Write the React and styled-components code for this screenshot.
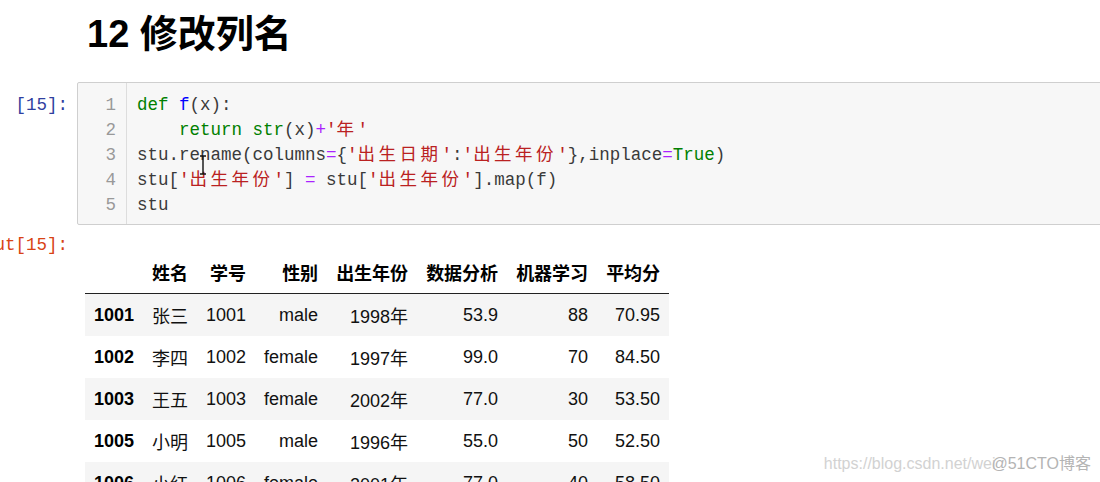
import React from "react";
import styled, { createGlobalStyle } from "styled-components";

const GlobalStyle = createGlobalStyle`
  html, body {
    margin: 0;
    padding: 0;
    background: #ffffff;
    overflow: hidden;
  }
`;

const Notebook = styled.div`
  position: relative;
  width: 1100px;
  height: 482px;
  overflow: hidden;
  font-family: "Liberation Sans", "Noto Sans CJK SC", sans-serif;
`;

const Title = styled.h1`
  margin: 0 0 25px 0;
  padding: 11px 0 0 87px;
  font-size: 38px;
  line-height: 46px;
  font-weight: 700;
  color: #000;
`;

const CellRow = styled.div`
  display: flex;
  align-items: flex-start;
  margin-top: ${(p) => p.$top || 0}px;
`;

const Prompt = styled.div`
  flex: 0 0 72px;
  width: 72px;
  min-width: 0;
  display: flex;
  justify-content: flex-end;
  padding: ${(p) => p.$pad || 0}px 4px 0 0;
  box-sizing: border-box;
  font-family: "Liberation Mono", "Noto Sans CJK SC", monospace;
  font-size: 17.5px;
  line-height: 25px;
  white-space: pre;
  color: ${(p) => (p.$out ? "#d84315" : "#303f9f")};
`;

const InputBox = styled.div`
  position: relative;
  flex: 0 0 1040px;
  margin-left: 5px;
  display: flex;
  background: #f7f7f7;
  border: 1px solid #cfcfcf;
  border-radius: 2px;
  padding: 10px 0 6px;
  font-family: "Liberation Mono", "Noto Sans CJK SC", monospace;
  font-size: 17.5px;
  line-height: 25px;
`;

const Gutter = styled.div`
  width: 49px;
  box-sizing: border-box;
  margin: -10px 0 -6px;
  padding: 10px 10px 6px 0;
  border-right: 1px solid #dddddd;
  text-align: right;
  color: #999999;
`;

const Lines = styled.div`
  padding-left: 10px;
  color: #3a3a3a;
`;

const Line = styled.div`
  white-space: pre;
  height: 25px;
`;

const Kw = styled.span`
  color: #008000;
`;
const Def = styled.span`
  color: #0000ff;
`;
const Op = styled.span`
  color: #aa22ff;
`;
const StrTok = styled.span`
  color: #ba2121;
`;
const Cjk = styled.span`
  letter-spacing: 3.5px;
`;

const Cursor = styled.svg`
  position: absolute;
  left: 120px;
  top: 72px;
`;

function Str({ children }) {
  const parts = children.split(/([\u4e00-\u9fff]+)/);
  return (
    <StrTok>
      {parts.map((p, i) => (/[\u4e00-\u9fff]/.test(p) ? <Cjk key={i}>{p}</Cjk> : p))}
    </StrTok>
  );
}

const Output = styled.div`
  margin-left: 5px;
  padding: 18px 0 0 8px;
`;

const Table = styled.table`
  border-collapse: collapse;
  border-spacing: 0;
  font-size: 18px;
  color: #000;
`;

const Th = styled.th`
  height: 42px;
  padding: 0 9px;
  text-align: right;
  vertical-align: middle;
  font-weight: 700;
  border-bottom: ${(p) => (p.$head ? "1.5px solid #222" : "none")};
  white-space: nowrap;
`;

const Tr = styled.tr`
  background: ${(p) => (p.$odd ? "#f5f5f5" : "#ffffff")};
`;

const Td = styled.td`
  height: 42px;
  padding: 0 9px;
  text-align: right;
  vertical-align: middle;
  white-space: nowrap;
  color: #111;
`;

const Watermark = styled.div`
  position: absolute;
  right: 9px;
  bottom: 8px;
  font-size: 16px;
  line-height: 20px;
  color: #d2d2d2;
  white-space: nowrap;
`;

const Mark = styled.span`
  margin-left: -4px;
  color: #b4b4b4;
`;

const headers = ["", "姓名", "学号", "性别", "出生年份", "数据分析", "机器学习", "平均分"];
const rows = [
  ["1001", "张三", "1001", "male", "1998年", "53.9", "88", "70.95"],
  ["1002", "李四", "1002", "female", "1997年", "99.0", "70", "84.50"],
  ["1003", "王五", "1003", "female", "2002年", "77.0", "30", "53.50"],
  ["1005", "小明", "1005", "male", "1996年", "55.0", "50", "52.50"],
  ["1006", "小红", "1006", "female", "2001年", "77.0", "40", "58.50"],
];

export default function App() {
  return (
    <Notebook>
      <GlobalStyle />
      <Title>12 修改列名</Title>

      <CellRow>
        <Prompt $pad={11}>[15]:</Prompt>
        <InputBox>
          <Gutter>
            {[1, 2, 3, 4, 5].map((n) => (
              <div key={n}>{n}</div>
            ))}
          </Gutter>
          <Lines>
            <Line>
              <Kw>def</Kw> <Def>f</Def>(x):
            </Line>
            <Line>
              {"    "}
              <Kw>return</Kw> <Kw>str</Kw>(x)<Op>+</Op>
              <Str>'年'</Str>
            </Line>
            <Line>
              stu.rename(columns<Op>=</Op>{"{"}
              <Str>'出生日期'</Str>:<Str>'出生年份'</Str>
              {"},"}inplace<Op>=</Op>
              <Kw>True</Kw>)
            </Line>
            <Line>
              stu[<Str>'出生年份'</Str>] <Op>=</Op> stu[<Str>'出生年份'</Str>].map(f)
            </Line>
            <Line>stu</Line>
          </Lines>
          <Cursor width="10" height="20" viewBox="0 0 10 20">
            <path d="M2 1h6M5 1v18M2 19h6" stroke="#111" strokeWidth="1.4" fill="none" />
          </Cursor>
        </InputBox>
      </CellRow>

      <CellRow $top={8}>
        <Prompt $out>Out[15]:</Prompt>
        <Output>
          <Table>
            <thead>
              <tr>
                {headers.map((h, i) => (
                  <Th key={i} $head>
                    {h}
                  </Th>
                ))}
              </tr>
            </thead>
            <tbody>
              {rows.map((r, i) => (
                <Tr key={r[0]} $odd={i % 2 === 0}>
                  <Th>{r[0]}</Th>
                  {r.slice(1).map((c, j) => (
                    <Td key={j}>{c}</Td>
                  ))}
                </Tr>
              ))}
            </tbody>
          </Table>
        </Output>
      </CellRow>

      <Watermark>
        https://blog.csdn.net/wei<Mark>@51CTO博客</Mark>
      </Watermark>
    </Notebook>
  );
}
